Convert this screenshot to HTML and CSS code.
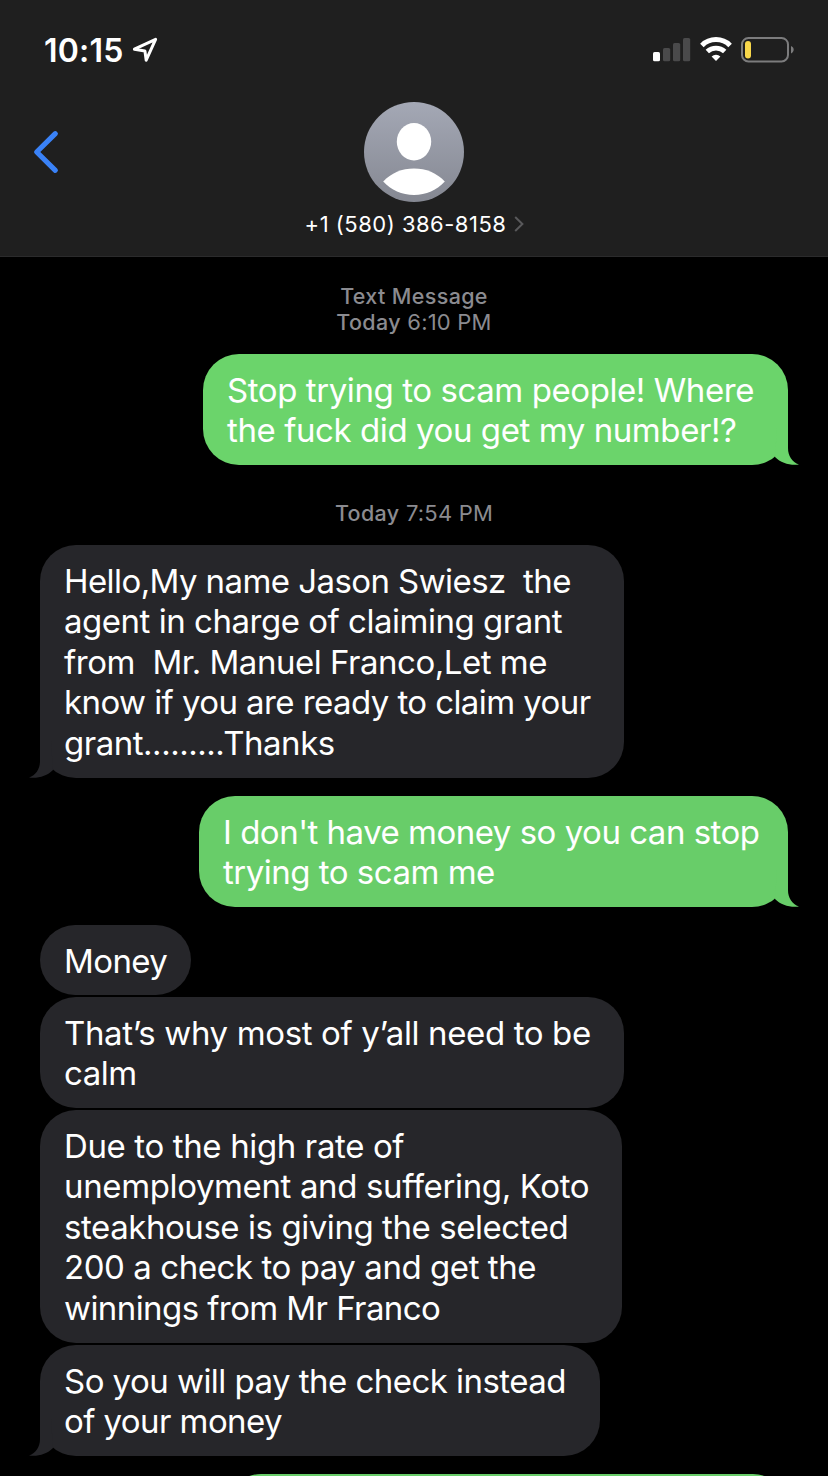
FILE: index.html
```html
<!DOCTYPE html>
<html lang="en">
<head>
    <meta charset="UTF-8">
    <meta name="viewport" content="width=device-width, initial-scale=1.0">
    <title>Messages</title>
    <link rel="stylesheet" href="styles.css">
</head>
<body>
    <svg class="defs" width="0" height="0">
        <symbol id="tail" viewBox="0 -9 32 37">
            <path d="M9 -9H20V11C20 19 24 25 31 27.6C22 28.8 13 26 7 20Z" fill="currentColor"/>
        </symbol>
    </svg>

    <div class="phone">
        <header class="header">
            <div class="status-bar">
                <div class="status-left">
                    <span class="time">10:15</span>
                    <svg class="location" width="26" height="26" viewBox="0 0 26 26">
                        <path d="M23.6 2.4 14.2 23.2 12.9 13.9 2.4 12.2Z" fill="none" stroke="#fff" stroke-width="3" stroke-linejoin="round"/>
                    </svg>
                </div>
                <div class="status-right">
                    <svg width="38" height="24" viewBox="0 0 38 24">
                        <rect x="0" y="14" width="7" height="9.3" rx="1.6" fill="#fff"/>
                        <rect x="10" y="10" width="7.2" height="13.3" rx="1.6" fill="#4a4a4b"/>
                        <rect x="20" y="5" width="7.2" height="18.3" rx="1.6" fill="#4a4a4b"/>
                        <rect x="30" y="0" width="7.2" height="23.3" rx="1.6" fill="#4a4a4b"/>
                    </svg>
                    <svg class="wifi" width="32" height="24" viewBox="0 0 32 24">
                        <path d="M1.9 8.4A20 20 0 0 1 30.1 8.4" fill="none" stroke="#fff" stroke-width="5"/>
                        <path d="M7.3 14.6A12.6 12.6 0 0 1 24.7 14.6" fill="none" stroke="#fff" stroke-width="4.8"/>
                        <path d="M16 24 11.6 19.4A6.6 6.6 0 0 1 20.4 19.4Z" fill="#fff"/>
                    </svg>
                    <svg class="battery" width="54" height="26" viewBox="0 0 54 26">
                        <rect x="1" y="1" width="46" height="23.4" rx="6.5" fill="none" stroke="#7c7c7d" stroke-width="2"/>
                        <path d="M50 9C53.6 10.4 53.6 15 50 16.4Z" fill="#7c7c7d"/>
                        <rect x="4" y="4" width="6" height="17.4" rx="3" fill="#f8d74a"/>
                    </svg>
                </div>
            </div>
            <div class="contact-bar">
                <svg class="back" width="26" height="44" viewBox="0 0 26 44">
                    <path d="M22.3 3.7 3.7 22 22.3 40.3" fill="none" stroke="#3a82f7" stroke-width="5.2" stroke-linecap="round" stroke-linejoin="round"/>
                </svg>
                <div class="contact">
                    <svg width="100" height="100" viewBox="0 0 100 100">
                        <defs>
                            <linearGradient id="avatar" x1="0" y1="0" x2="0" y2="1">
                                <stop offset="0" stop-color="#a4a8b5"/>
                                <stop offset="1" stop-color="#858892"/>
                            </linearGradient>
                        </defs>
                        <circle cx="50" cy="50" r="50" fill="url(#avatar)"/>
                        <ellipse cx="50" cy="39.7" rx="17.2" ry="18.7" fill="#fff"/>
                        <path d="M19.2 79.5C27 71 38 66.5 50 66.5S73 71 80.8 79.5C73 88 62 93 50 93S27 88 19.2 79.5Z" fill="#fff"/>
                    </svg>
                    <div class="number">
                        <span>+1 (580) 386-8158</span>
                        <svg width="10" height="16" viewBox="0 0 10 16">
                            <path d="M1.2 1 8.4 8 1.2 15" fill="none" stroke="#59595b" stroke-width="2"/>
                        </svg>
                    </div>
                </div>
            </div>
        </header>

        <main class="messages">
            <div class="timestamp first"><b>Text Message</b><br><b>Today</b> 6:10 PM</div>
            <div class="bubble sent w1"><p>Stop trying to scam people! Where</p><p>the fuck did you get my number!?</p><svg class="tail"><use href="#tail"/></svg></div>

            <div class="timestamp second"><b>Today</b> 7:54 PM</div>
            <div class="bubble received wide"><p class="tight">Hello,My name Jason Swiesz  the</p><p>agent in charge of claiming grant</p><p>from  Mr. Manuel Franco,Let me</p><p class="tight">know if you are ready to claim your</p><p>grant.........Thanks</p><svg class="tail"><use href="#tail"/></svg></div>

            <div class="bubble sent dim w2"><p>I don't have money so you can stop</p><p>trying to scam me</p><svg class="tail"><use href="#tail"/></svg></div>

            <div class="group">
                <div class="bubble received short"><p class="tight">Money</p></div>
                <div class="bubble received wide"><p class="loose">That’s why most of y’all need to be</p><p>calm</p></div>
                <div class="bubble received w3"><p class="loose">Due to the high rate of</p><p class="loose">unemployment and suffering, Koto</p><p>steakhouse is giving the selected</p><p>200 a check to pay and get the</p><p class="tight">winnings from Mr Franco</p></div>
                <div class="bubble received w4"><p>So you will pay the check instead</p><p class="tight">of your money</p><svg class="tail"><use href="#tail"/></svg></div>
            </div>

            <div class="bubble sent dim w5"></div>
        </main>
    </div>
</body>
</html>
```
FILE: styles.css
```css
* {
    box-sizing: border-box;
}
body {
    margin: 0;
    background-color: #000;
    color: #fff;
    font-family: Inter, "Liberation Sans", sans-serif;
}
svg {
    display: block;
    flex: none;
}
.defs {
    display: none;
}
.phone {
    width: 828px;
    height: 1476px;
    overflow: hidden;
    display: flex;
    flex-direction: column;
}

/* header */
.header {
    flex: none;
    height: 257px;
    background-color: #1f1f1f;
    border-bottom: 1px solid #2b2b2c;
}
.status-bar {
    display: flex;
    justify-content: space-between;
    height: 102px;
    padding: 30px 33px 0 44px;
}
.status-left {
    display: flex;
}
.time {
    font-size: 32px;
    line-height: 42px;
    font-weight: 600;
    letter-spacing: 0.2px;
    width: 88px;
    white-space: nowrap;
}
.location {
    margin-top: 7px;
}
.status-right {
    display: flex;
    padding-top: 8px;
}
.wifi {
    margin-left: 9px;
    margin-top: -1px;
}
.battery {
    margin-left: 9px;
    margin-top: -1px;
}
.contact-bar {
    display: grid;
    grid-template-columns: 1fr 240px 1fr;
}
.back {
    margin: 28px 0 0 33px;
}
.contact {
    display: flex;
    flex-direction: column;
    align-items: center;
}
.number {
    display: flex;
    align-items: center;
    gap: 8px;
    margin-top: 8px;
    padding-left: 1px;
    font-size: 22px;
    line-height: 28px;
    letter-spacing: 0.5px;
    white-space: nowrap;
}

/* conversation */
.messages {
    flex: none;
    display: flex;
    flex-direction: column;
    align-items: flex-start;
}
.timestamp {
    align-self: center;
    text-align: center;
    color: #8b8b90;
    font-size: 22px;
    line-height: 26px;
    letter-spacing: 0.2px;
}
.timestamp b {
    font-size: 21.5px;
    font-weight: 500;
    letter-spacing: 0.35px;
}
.first {
    margin: 26px 0 19px;
}
.second {
    margin: 35px 0 19px;
}
.bubble {
    position: relative;
    min-height: 70px;
    padding: 15.5px 24px 14.5px;
    border-radius: 36px;
    font-size: 33px;
    line-height: 40.5px;
    letter-spacing: -0.48px;
    white-space: pre;
}
.bubble p {
    margin: 0;
}
.bubble .tight {
    letter-spacing: -0.58px;
}
.bubble .loose {
    letter-spacing: -0.37px;
}
.sent {
    align-self: flex-end;
    margin-right: 40px;
    background-color: #6bd46b;
    color: #fff;
}
.sent .tail {
    color: #6bd46b;
}
.dim {
    background-color: #68cd69;
}
.dim .tail {
    color: #68cd69;
}
.received {
    margin-left: 40px;
    background-color: #26262a;
}
.tail {
    position: absolute;
    right: -12px;
    bottom: 0;
    width: 32px;
    height: 37px;
}
.received .tail {
    right: auto;
    left: -12px;
    color: #26262a;
    transform: scaleX(-1);
}
.w1 {
    width: 585px;
    letter-spacing: -0.42px;
}
.wide {
    width: 584px;
}
.w2 {
    width: 589px;
    margin-top: 18.5px;
    margin-bottom: 18px;
    letter-spacing: -0.5px;
}
.short {
    width: 151px;
    height: 70px;
}
.w3 {
    width: 582px;
    letter-spacing: -0.44px;
}
.w4 {
    width: 560px;
    margin-top: 0.5px;
    letter-spacing: -0.54px;
}
.w5 {
    width: 562px;
    margin-top: 18px;
}
.group {
    display: flex;
    flex-direction: column;
    gap: 2px;
}
```
